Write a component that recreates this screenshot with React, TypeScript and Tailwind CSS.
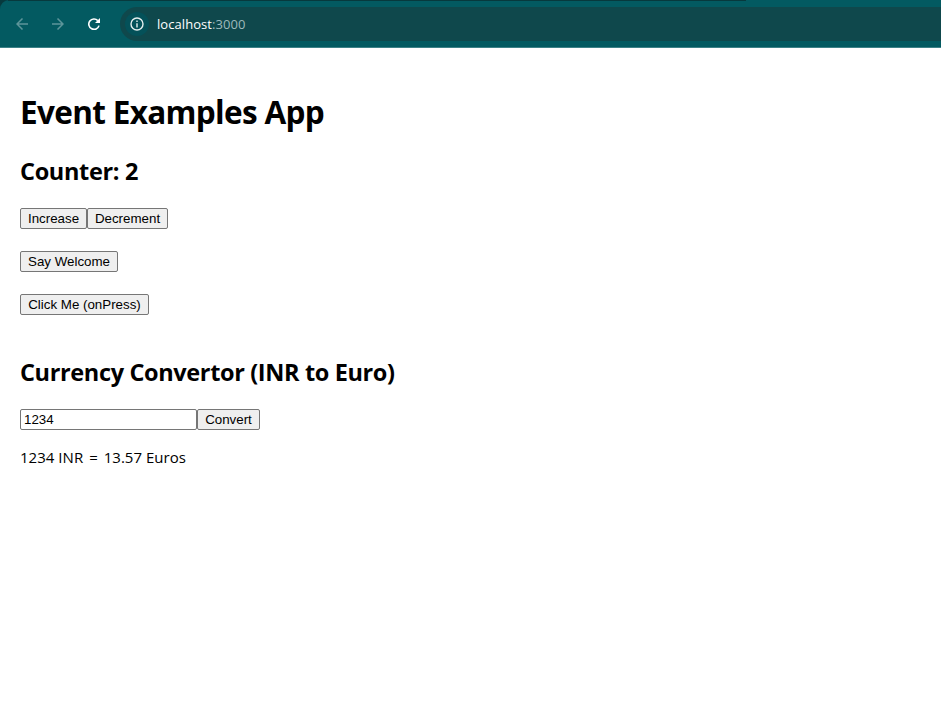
import { useState, type ReactNode } from "react";

function PushButton({ width, onClick, children }: { width: string; onClick?: () => void; children: ReactNode }) {
  return (
    <button
      onClick={onClick}
      className={`${width} h-[21px] shrink-0 whitespace-nowrap rounded-[2px] border border-[#767676] bg-[#efefef] text-center font-['Liberation_Sans',Arial,sans-serif] text-[13.333px] leading-[19px] text-black`}
    >
      {children}
    </button>
  );
}

function BrowserBar() {
  return (
    <header className="h-12 bg-[#07393d]">
      <div className="relative flex h-12 items-center rounded-tl-[9px] border-b border-[#3d8187] bg-[#035a61]">
        <div className="absolute left-2 top-0 h-px w-[738px] bg-[#07393d]" />
        <svg className="ml-4 h-3 w-3" viewBox="0 0 12 12" fill="none" stroke="#5d959a" strokeWidth="1.5">
          <path d="M12 6H1M6.500 .5L1 6l5.500 5.500" />
        </svg>
        <svg className="ml-6 h-3 w-3" viewBox="0 0 12 12" fill="none" stroke="#5d959a" strokeWidth="1.5">
          <path d="M0 6h11M5.500 .5L11 6l-5.500 5.500" />
        </svg>
        <svg className="ml-6 h-3 w-3" viewBox="0 0 12 12" fill="none" stroke="#fff" strokeWidth="1.6">
          <path d="M9.800 2.600A5.200 5.200 0 1 0 11 7.600" />
          <path d="M12 0v5H7z" fill="#fff" stroke="none" />
        </svg>
        <div className="ml-5 flex h-[34px] flex-1 items-center rounded-l-full bg-[#0f484c] pl-[5px]">
          <div className="flex h-6 w-6 items-center justify-center rounded-full bg-[#045159]">
            <svg className="h-[14px] w-[14px]" viewBox="0 0 14 14" fill="none" stroke="#e4eeee" strokeWidth="1.4">
              <circle cx="7" cy="7" r="6" />
              <path d="M7 6.200v4.200M7 3.500v1.500" />
            </svg>
          </div>
          <span className="ml-2 font-['Open_Sans','Noto_Sans',sans-serif] text-[13px] leading-5 tracking-[0.06px] text-white">
            localhost<span className="text-[#9db9bb]">:3000</span>
          </span>
        </div>
      </div>
    </header>
  );
}

export default function App() {
  const [count, setCount] = useState(2);
  const [amount, setAmount] = useState("1234");
  const [result, setResult] = useState({ inr: "1234", euros: "13.57" });

  return (
    <div className="min-h-[705px] bg-white font-['Open_Sans','Noto_Sans',sans-serif] text-black">
      <BrowserBar />
      <main className="flex flex-col items-start px-5 pt-[42px]">
        <h1 className="h-[43px] whitespace-nowrap text-[31.500px] font-bold leading-[43px] tracking-[-0.67px]">
          Event Examples App
        </h1>
        <h2 className="mt-[22px] h-8 whitespace-nowrap text-[23.500px] font-bold leading-8 tracking-[-0.34px]">
          Counter: {count}
        </h2>
        <div className="mt-[21px] flex">
          <PushButton width="w-[67px]" onClick={() => setCount(count + 1)}>Increase</PushButton>
          <PushButton width="w-[81px]" onClick={() => setCount(count - 1)}>Decrement</PushButton>
        </div>
        <div className="mt-[22px] flex">
          <PushButton width="w-[98px]">Say Welcome</PushButton>
        </div>
        <div className="mt-[22px] flex">
          <PushButton width="w-[129px]">Click Me (onPress)</PushButton>
        </div>
        <h2 className="mt-[41px] h-8 whitespace-nowrap text-[23.500px] font-bold leading-8 tracking-[-0.36px]">
          Currency Convertor (INR to Euro)
        </h2>
        <div className="mt-[21px] flex">
          <input
            value={amount}
            onChange={(e) => setAmount(e.target.value)}
            className="h-[21px] w-[177px] rounded-[2px] border border-[#767676] bg-white px-[3px] font-['Liberation_Sans',Arial,sans-serif] text-[13.333px] leading-[19px]"
          />
          <PushButton
            width="w-[63px]"
            onClick={() => setResult({ inr: amount, euros: (Number(amount) * 0.011).toFixed(2) })}
          >
            Convert
          </PushButton>
        </div>
        <p className="mt-4 whitespace-nowrap text-[15px] leading-[22px] tracking-[0.03px]">
          {result.inr} INR <span className="mx-[2px]">=</span> {result.euros} Euros
        </p>
      </main>
    </div>
  );
}
